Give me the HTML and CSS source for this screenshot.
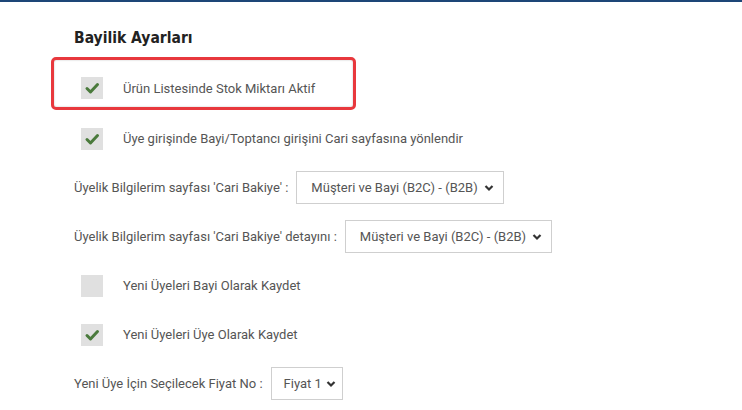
FILE: index.html
```html
<!DOCTYPE html>
<html lang="tr">
<head>
<meta charset="utf-8">
<title>Bayilik Ayarları</title>
<link rel="stylesheet" href="styles.css">
</head>
<body>
<div class="topline"></div>
<section class="panel">
  <h2 class="title">Bayilik Ayarları</h2>

  <div class="row highlight">
    <span class="check on"><svg viewBox="0 0 22 22" width="22" height="22"><path d="M6 11.5 L9.5 15 L16.5 7.5" fill="none" stroke="#4a7a3c" stroke-width="3" stroke-linecap="round" stroke-linejoin="round"/></svg></span>
    <span class="label">Ürün Listesinde Stok Miktarı Aktif</span>
  </div>

  <div class="row check-row">
    <span class="check on"><svg viewBox="0 0 22 22" width="22" height="22"><path d="M6 11.5 L9.5 15 L16.5 7.5" fill="none" stroke="#4a7a3c" stroke-width="3" stroke-linecap="round" stroke-linejoin="round"/></svg></span>
    <span class="label">Üye girişinde Bayi/Toptancı girişini Cari sayfasına yönlendir</span>
  </div>

  <div class="row">
    <span class="field-label">Üyelik Bilgilerim sayfası 'Cari Bakiye' :</span>
    <div class="select"><span>Müşteri ve Bayi (B2C) - (B2B)</span><svg class="chev" viewBox="0 0 10 8" width="10" height="8"><path d="M1.5 2 L5 5.5 L8.5 2" fill="none" stroke="#333" stroke-width="2.2"/></svg></div>
  </div>

  <div class="row">
    <span class="field-label">Üyelik Bilgilerim sayfası 'Cari Bakiye' detayını :</span>
    <div class="select"><span>Müşteri ve Bayi (B2C) - (B2B)</span><svg class="chev" viewBox="0 0 10 8" width="10" height="8"><path d="M1.5 2 L5 5.5 L8.5 2" fill="none" stroke="#333" stroke-width="2.2"/></svg></div>
  </div>

  <div class="row check-row">
    <span class="check"></span>
    <span class="label">Yeni Üyeleri Bayi Olarak Kaydet</span>
  </div>

  <div class="row check-row">
    <span class="check on"><svg viewBox="0 0 22 22" width="22" height="22"><path d="M6 11.5 L9.5 15 L16.5 7.5" fill="none" stroke="#4a7a3c" stroke-width="3" stroke-linecap="round" stroke-linejoin="round"/></svg></span>
    <span class="label">Yeni Üyeleri Üye Olarak Kaydet</span>
  </div>

  <div class="row">
    <span class="field-label">Yeni Üye İçin Seçilecek Fiyat No :</span>
    <div class="select small"><span>Fiyat 1</span><svg class="chev" viewBox="0 0 10 8" width="10" height="8"><path d="M1.5 2 L5 5.5 L8.5 2" fill="none" stroke="#333" stroke-width="2.2"/></svg></div>
  </div>
</section>
</body>
</html>
```

FILE: styles.css
```css
* { box-sizing: border-box; }
html, body {
  margin: 0;
  background: #fff;
  font-family: Roboto, "Liberation Sans", sans-serif;
  color: #555;
}
.topline {
  height: 2px;
  background: #1d4677;
}
.panel {
  padding: 26px 0 0 74px;
}
.title {
  margin: 0 0 9px;
  font-family: "Liberation Sans Narrow", "DejaVu Sans Condensed", "Liberation Sans", sans-serif;
  font-weight: bold;
  font-size: 15.5px;
  line-height: 20px;
  color: #222;
}
.row {
  display: flex;
  align-items: center;
  height: 49px;
  font-size: 13px;
}
.check-row {
  padding-left: 7px;
}
.highlight {
  width: fit-content;
  height: 53px;
  margin: 0 0 4px -23px;
  padding: 9px 38px 0 27px;
  border: 3px solid #e8383d;
  border-radius: 5px;
  box-shadow: inset 0 0 2px rgba(0,0,0,0.25);
}
.check {
  width: 22px;
  height: 22px;
  background: #e0e0e0;
  display: block;
  flex: none;
}
.check svg { display: block; }
.label {
  margin-left: 20px;
}
.field-label {
  margin-right: 8px;
}
.select {
  display: flex;
  align-items: center;
  gap: 6px;
  height: 33px;
  padding: 0 9px 0 14px;
  border: 1px solid #cfcfcf;
  color: #555;
  background: #fff;
}
.select.small {
  gap: 4px;
  padding: 0 6px 0 12px;
}
.chev { display: block; }
```
